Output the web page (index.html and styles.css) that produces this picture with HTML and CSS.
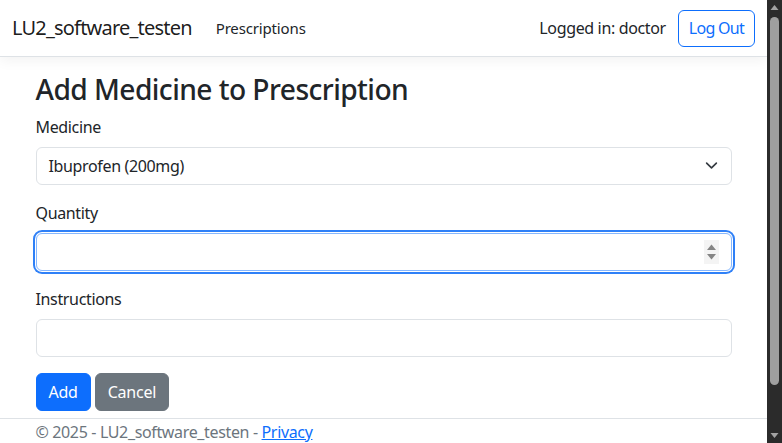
FILE: index.html
```html
<!DOCTYPE html>
<html lang="en">
<head>
<meta charset="utf-8">
<title>Add Medicine - LU2_software_testen</title>
<link rel="stylesheet" href="styles.css">
</head>
<body>
<div class="viewport">
  <header class="navbar">
    <div class="nav-inner">
      <a class="brand" href="#">LU2_software_testen</a>
      <nav class="nav-links">
        <a class="nav-link" href="#">Prescriptions</a>
      </nav>
      <div class="nav-right">
        <span class="user">Logged in: doctor</span>
        <button class="btn btn-outline">Log Out</button>
      </div>
    </div>
  </header>
  <main class="container">
    <h2 class="title">Add Medicine to Prescription</h2>
    <form class="form">
      <div class="group">
        <label class="label">Medicine</label>
        <div class="control select">
          <span class="select-value">Ibuprofen (200mg)</span>
          <svg class="chevron" width="13" height="13" viewBox="0 0 16 16"><path d="M2 5l6 6 6-6" fill="none" stroke="#343a40" stroke-width="2" stroke-linecap="round" stroke-linejoin="round"/></svg>
        </div>
      </div>
      <div class="group">
        <label class="label">Quantity</label>
        <div class="control focused">
          <input class="bare-input" type="text" value="">
          <span class="spinner">
            <svg width="15" height="24" viewBox="0 0 15 24"><rect x="0" y="0" width="15" height="24" fill="#f4f4f4"/><path d="M3 10 L7.5 4.5 L12 10 Z" fill="#858585"/><path d="M3 14 L12 14 L7.5 19.5 Z" fill="#858585"/></svg>
          </span>
        </div>
      </div>
      <div class="group">
        <label class="label">Instructions</label>
        <div class="control"><input class="bare-input" type="text" value=""></div>
      </div>
      <div class="actions">
        <button type="button" class="btn btn-primary">Add</button>
        <button type="button" class="btn btn-secondary">Cancel</button>
      </div>
    </form>
  </main>
  <footer class="footer">
    <div class="container footer-inner">© 2025 - LU2_software_testen - <a href="#" class="privacy">Privacy</a></div>
  </footer>
</div>
<div class="scrollbar">
  <div class="sb-btn"><svg width="15" height="15" viewBox="0 0 15 15"><path d="M3.5 10 L7.5 5 L11.5 10 Z" fill="#a3a3a3"/></svg></div>
  <div class="sb-track"><div class="sb-thumb"></div></div>
  <div class="sb-btn"><svg width="15" height="15" viewBox="0 0 15 15"><path d="M3.5 5 L11.5 5 L7.5 10 Z" fill="#a3a3a3"/></svg></div>
</div>
</body>
</html>
```
FILE: styles.css
```css
* { box-sizing: border-box; }
html, body { margin: 0; padding: 0; height: 443px; overflow: hidden; }
body {
  display: flex;
  font-family: "Segoe UI", "Noto Sans", "Open Sans", sans-serif;
  font-size: 16px;
  line-height: 1.5;
  letter-spacing: -0.022em;
  color: #212529;
  background: #fff;
}
.viewport { flex: 1; min-width: 0; height: 443px; overflow: hidden; display: flex; flex-direction: column; }
.navbar {
  height: 57px;
  border-bottom: 1px solid #dee2e6;
  box-shadow: 0 4px 12px rgba(0,0,0,.05);
  flex: none;
}
.nav-inner { height: 56px; display: flex; align-items: center; padding: 0 12px; }
.brand { font-size: 20px; color: rgba(0,0,0,.9); text-decoration: none; margin-right: 16px; line-height: 30px; letter-spacing: -0.04em; }
.nav-links { display: flex; flex: 1; }
.nav-link { color: #212529; text-decoration: none; padding: 8px; font-size: 15px; letter-spacing: -0.01em; }
.nav-right { display: flex; align-items: center; gap: 12px; }
.user { font-size: 16px; color: #212529; }
.btn {
  font-family: inherit; font-size: 16px; line-height: 24px; letter-spacing: -0.015em;
  padding: 6px 12px; border-radius: 6px; border: 1px solid transparent; cursor: pointer;
}
.btn-outline { color: #0d6efd; border-color: #0d6efd; background: #fff; height: 37px; padding: 5px 10px; letter-spacing: -0.045em; }
.btn-primary { background: #0d6efd; color: #fff; border-color: #0d6efd; }
.btn-secondary { background: #6c757d; color: #fff; border-color: #6c757d; }
.container { width: 100%; max-width: 720px; margin: 0 auto; padding: 0 12px; }
main.container { padding-top: 16px; flex: none; }
.title { font-size: 28.2px; font-weight: 500; line-height: 1.2; margin: 0 0 8px; letter-spacing: -0.02em; }
.group { margin-bottom: 16px; }
.label { display: block; margin-bottom: 8px; }
.control {
  height: 38px; border: 1px solid #dee2e6; border-radius: 6px; background: #fff;
  display: flex; align-items: center;
}
.select { padding: 0 13px 0 12px; justify-content: space-between; }
.focused { border-color: #86b7fe; box-shadow: 0 0 0 1px #fff, 0 0 0 3px #2f80f7; }
.bare-input { flex: 1; border: 0; outline: 0; height: 100%; padding: 0 12px; font: inherit; background: transparent; min-width: 0; }
.spinner { display: flex; margin-right: 12px; }
.actions { display: flex; gap: 4px; }
.footer { border-top: 1px solid #dee2e6; margin-top: 7px; flex: none; }
.footer-inner { color: #6c757d; padding-top: 1px; line-height: 24px; }
.privacy { color: #0d6efd; }
.scrollbar { width: 15px; height: 443px; background: #2b2b2b; display: flex; flex-direction: column; flex: none; }
.sb-btn { height: 15px; flex: none; display: flex; }
.sb-track { flex: 1; padding: 2px 3px 0; }
.sb-thumb { height: 368px; background: #9f9f9f; border-radius: 5px; }
```
